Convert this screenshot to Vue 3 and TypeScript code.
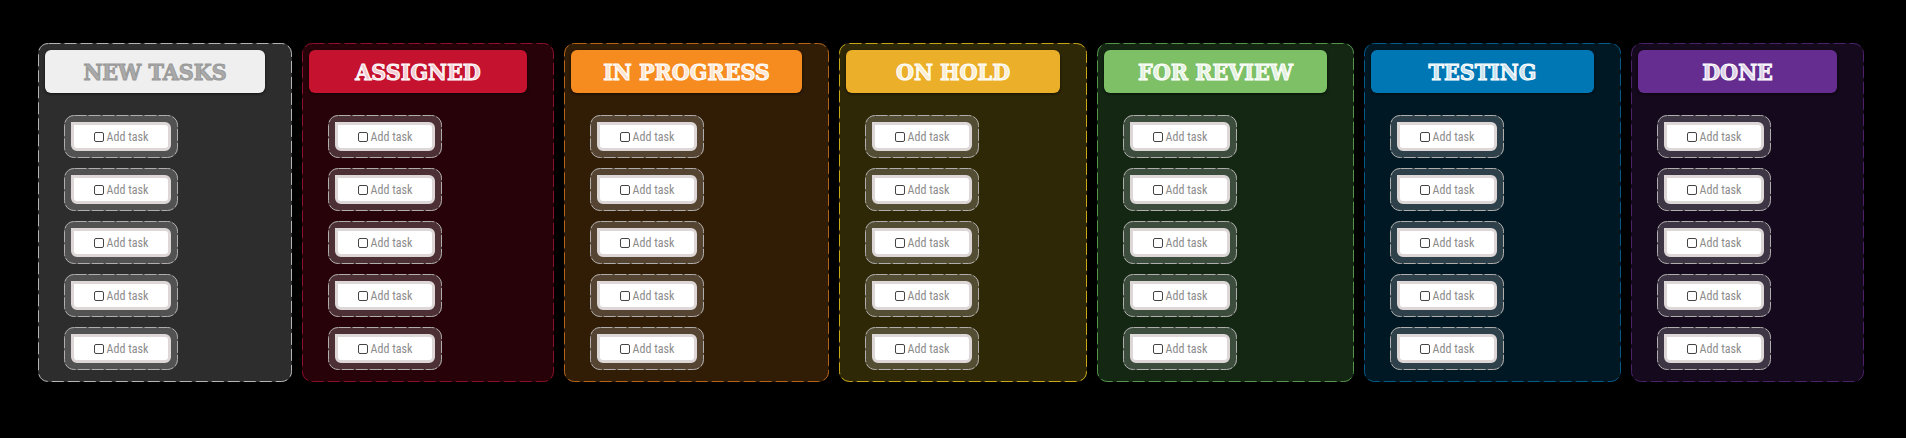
<script setup lang="ts">
interface Column { id: string; title: string }

const columns: Column[] = [
  { id: 'new', title: 'NEW TASKS' },
  { id: 'assigned', title: 'ASSIGNED' },
  { id: 'progress', title: 'IN PROGRESS' },
  { id: 'hold', title: 'ON HOLD' },
  { id: 'review', title: 'FOR REVIEW' },
  { id: 'testing', title: 'TESTING' },
  { id: 'done', title: 'DONE' },
]
const slots = [1, 2, 3, 4, 5]
</script>

<template>
  <main class="board">
    <section v-for="column in columns" :key="column.id" class="column" :class="column.id">
      <svg class="outline" aria-hidden="true"><rect x="0.5" y="0.5" rx="10" /></svg>
      <h2 class="title">{{ column.title }}</h2>
      <ul class="tasks">
        <li v-for="slot in slots" :key="slot" class="slot">
          <svg class="outline" aria-hidden="true"><rect x="0.5" y="0.5" rx="10" /></svg>
          <label class="task">
            <input type="checkbox" class="tick" />
            <span>Add task</span>
          </label>
        </li>
      </ul>
    </section>
  </main>
</template>

<style>
body {
  margin: 0;
  background: #000;
}
</style>

<style scoped>
.board {
  display: grid;
  grid-template-columns: 254fr 252fr 265fr 248fr 257fr 257fr 233fr;
  gap: 10px;
  padding: 43px 42px 54px 38px;
}
.column {
  --line: #b4b4b4;
  --dash: 12 4;
  --ink: #fff;
  --inline: rgba(255, 255, 255, 0.8);
  position: relative;
  box-sizing: border-box;
  min-width: 0;
  padding: 7px 27px 12px 7px;
  border-radius: 10px;
  background: var(--body);
}
.outline {
  position: absolute;
  inset: 0;
  width: 100%;
  height: 100%;
  pointer-events: none;
}
.outline rect {
  width: calc(100% - 1px);
  height: calc(100% - 1px);
  fill: none;
  stroke: var(--line);
  stroke-width: 1px;
  stroke-dasharray: var(--dash);
}
.title {
  margin: 0 0 22px;
  border-radius: 6px;
  background: var(--head);
  box-shadow: 0 1px 3px rgba(0, 0, 0, 0.6);
  color: var(--inline);
  -webkit-text-stroke: 1px var(--ink);
  font: bold 23px/43px "DejaVu Serif Condensed", "DejaVu Serif", serif;
  text-align: center;
  white-space: nowrap;
}
.tasks {
  display: grid;
  justify-content: start;
  gap: 10px;
  margin: 0;
  padding: 0 0 0 19px;
  list-style: none;
}
.slot {
  --line: #b0aeac;
  --dash: 12 2;
  position: relative;
  padding: 7px;
  border-radius: 10px;
  background: rgba(255, 255, 255, 0.18);
}
.task {
  display: flex;
  align-items: center;
  justify-content: center;
  gap: 3px;
  box-sizing: border-box;
  width: 100px;
  height: 29px;
  border: 3px solid #ddd7d7;
  border-radius: 0 6px 6px 6px;
  background: #fff;
  color: #8c8c8c;
  font: 12px/16px "Ubuntu Condensed", "Roboto Condensed", "Open Sans Condensed", sans-serif;
  white-space: nowrap;
}
.tick {
  appearance: none;
  box-sizing: border-box;
  width: 10px;
  height: 10px;
  margin: 0;
  border: 1px solid #444;
  border-radius: 2px;
  background: #fff;
}
.new { --head: #efefef; --body: #2d2d2d; --ink: #999; --inline: #aaa; }
.assigned { --head: #c4122f; --body: #270309; --line: #8b1029; }
.progress { --head: #f68b1f; --body: #311c06; --line: #b5651a; }
.hold { --head: #ebaf29; --body: #2e2807; --line: #c7a71a; }
.review { --head: #7dc066; --body: #132713; --line: #55964c; }
.testing { --head: #0077b5; --body: #001824; --line: #045a88; }
.done { --head: #662d91; --body: #14091d; --line: #4b216a; }
</style>
